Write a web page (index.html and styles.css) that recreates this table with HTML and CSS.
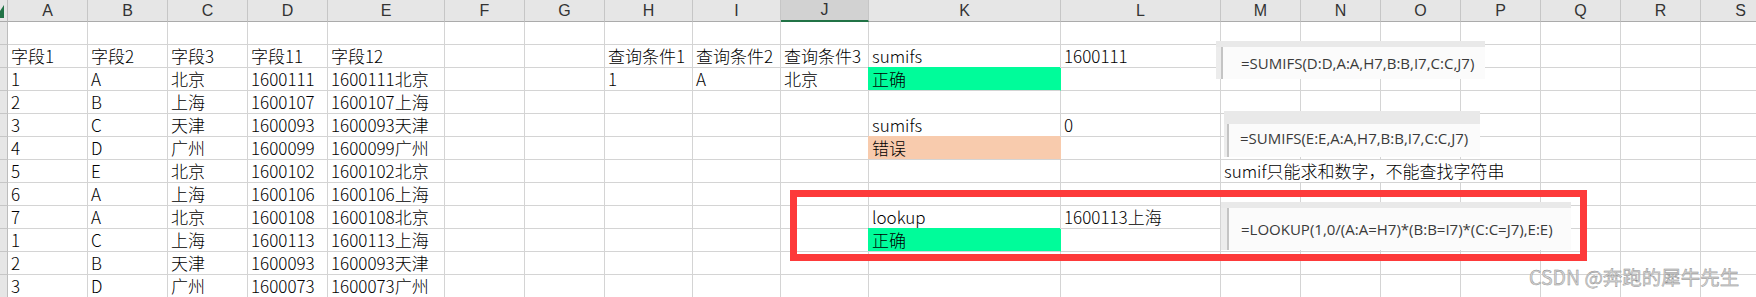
FILE: index.html
```html
<!DOCTYPE html>
<html lang="zh-CN">
<head>
<meta charset="utf-8">
<title>Sheet</title>
<link rel="stylesheet" href="styles.css">
</head>
<body>
<div class="page">
  <div class="sheet">
    <div class="corner"><svg width="7" height="21" viewBox="0 0 7 21"><polygon points="0,11 4,5 4,18 0,18" fill="#217346"/></svg></div>
    <div class="ch">A</div><div class="ch">B</div><div class="ch">C</div><div class="ch">D</div><div class="ch">E</div><div class="ch">F</div><div class="ch">G</div><div class="ch">H</div><div class="ch">I</div><div class="ch sel">J</div><div class="ch">K</div><div class="ch">L</div><div class="ch">M</div><div class="ch">N</div><div class="ch">O</div><div class="ch">P</div><div class="ch">Q</div><div class="ch">R</div><div class="ch">S</div>

    <div class="rh"></div><div class="c"></div><div class="c"></div><div class="c"></div><div class="c"></div><div class="c"></div><div class="c"></div><div class="c"></div><div class="c"></div><div class="c"></div><div class="c"></div><div class="c"></div><div class="c"></div><div class="c"></div><div class="c"></div><div class="c"></div><div class="c"></div><div class="c"></div><div class="c"></div><div class="c"></div>

    <div class="rh"></div><div class="c">字段1</div><div class="c">字段2</div><div class="c">字段3</div><div class="c">字段11</div><div class="c">字段12</div><div class="c"></div><div class="c"></div><div class="c">查询条件1</div><div class="c">查询条件2</div><div class="c">查询条件3</div><div class="c">sumifs</div><div class="c">1600111</div><div class="c"></div><div class="c"></div><div class="c"></div><div class="c"></div><div class="c"></div><div class="c"></div><div class="c"></div>

    <div class="rh"></div><div class="c">1</div><div class="c">A</div><div class="c">北京</div><div class="c">1600111</div><div class="c">1600111北京</div><div class="c"></div><div class="c"></div><div class="c">1</div><div class="c">A</div><div class="c">北京</div><div class="c ok">正确</div><div class="c"></div><div class="c"></div><div class="c"></div><div class="c"></div><div class="c"></div><div class="c"></div><div class="c"></div><div class="c"></div>

    <div class="rh"></div><div class="c">2</div><div class="c">B</div><div class="c">上海</div><div class="c">1600107</div><div class="c">1600107上海</div><div class="c"></div><div class="c"></div><div class="c"></div><div class="c"></div><div class="c"></div><div class="c"></div><div class="c"></div><div class="c"></div><div class="c"></div><div class="c"></div><div class="c"></div><div class="c"></div><div class="c"></div><div class="c"></div>

    <div class="rh"></div><div class="c">3</div><div class="c">C</div><div class="c">天津</div><div class="c">1600093</div><div class="c">1600093天津</div><div class="c"></div><div class="c"></div><div class="c"></div><div class="c"></div><div class="c"></div><div class="c">sumifs</div><div class="c">0</div><div class="c"></div><div class="c"></div><div class="c"></div><div class="c"></div><div class="c"></div><div class="c"></div><div class="c"></div>

    <div class="rh"></div><div class="c">4</div><div class="c">D</div><div class="c">广州</div><div class="c">1600099</div><div class="c">1600099广州</div><div class="c"></div><div class="c"></div><div class="c"></div><div class="c"></div><div class="c"></div><div class="c bad">错误</div><div class="c"></div><div class="c"></div><div class="c"></div><div class="c"></div><div class="c"></div><div class="c"></div><div class="c"></div><div class="c"></div>

    <div class="rh"></div><div class="c">5</div><div class="c">E</div><div class="c">北京</div><div class="c">1600102</div><div class="c">1600102北京</div><div class="c"></div><div class="c"></div><div class="c"></div><div class="c"></div><div class="c"></div><div class="c"></div><div class="c"></div><div class="c span4">sumif只能求和数字，不能查找字符串</div><div class="c"></div><div class="c"></div><div class="c"></div>

    <div class="rh"></div><div class="c">6</div><div class="c">A</div><div class="c">上海</div><div class="c">1600106</div><div class="c">1600106上海</div><div class="c"></div><div class="c"></div><div class="c"></div><div class="c"></div><div class="c"></div><div class="c"></div><div class="c"></div><div class="c"></div><div class="c"></div><div class="c"></div><div class="c"></div><div class="c"></div><div class="c"></div><div class="c"></div>

    <div class="rh"></div><div class="c">7</div><div class="c">A</div><div class="c">北京</div><div class="c">1600108</div><div class="c">1600108北京</div><div class="c"></div><div class="c"></div><div class="c"></div><div class="c"></div><div class="c"></div><div class="c">lookup</div><div class="c">1600113上海</div><div class="c"></div><div class="c"></div><div class="c"></div><div class="c"></div><div class="c"></div><div class="c"></div><div class="c"></div>

    <div class="rh"></div><div class="c">1</div><div class="c">C</div><div class="c">上海</div><div class="c">1600113</div><div class="c">1600113上海</div><div class="c"></div><div class="c"></div><div class="c"></div><div class="c"></div><div class="c"></div><div class="c ok">正确</div><div class="c"></div><div class="c"></div><div class="c"></div><div class="c"></div><div class="c"></div><div class="c"></div><div class="c"></div><div class="c"></div>

    <div class="rh"></div><div class="c">2</div><div class="c">B</div><div class="c">天津</div><div class="c">1600093</div><div class="c">1600093天津</div><div class="c"></div><div class="c"></div><div class="c"></div><div class="c"></div><div class="c"></div><div class="c"></div><div class="c"></div><div class="c"></div><div class="c"></div><div class="c"></div><div class="c"></div><div class="c"></div><div class="c"></div><div class="c"></div>

    <div class="rh"></div><div class="c">3</div><div class="c">D</div><div class="c">广州</div><div class="c">1600073</div><div class="c">1600073广州</div><div class="c"></div><div class="c"></div><div class="c"></div><div class="c"></div><div class="c"></div><div class="c"></div><div class="c"></div><div class="c"></div><div class="c"></div><div class="c"></div><div class="c"></div><div class="c"></div><div class="c"></div><div class="c"></div>
  </div>

  <div class="fbox f1">
    <div class="ftop"></div>
    <div class="fbody"><div class="fleft"></div><div class="ftext">=SUMIFS(D:D,A:A,H7,B:B,I7,C:C,J7)</div></div>
  </div>
  <div class="fbox f2">
    <div class="ftop"></div>
    <div class="fbody"><div class="fleft"></div><div class="ftext">=SUMIFS(E:E,A:A,H7,B:B,I7,C:C,J7)</div></div>
  </div>
  <div class="fbox f3">
    <div class="ftop"></div>
    <div class="fbody"><div class="fleft"></div><div class="ftext">=LOOKUP(1,0/(A:A=H7)*(B:B=I7)*(C:C=J7),E:E)</div></div>
  </div>

  <div class="redbox"></div>
  <div class="mark">CSDN @奔跑的犀牛先生</div>
</div>
</body>
</html>
```

FILE: styles.css
```css
html, body {
  margin: 0;
  padding: 0;
  background: #ffffff;
}
body {
  width: 1756px;
  height: 297px;
  overflow: hidden;
  font-family: "Noto Sans CJK SC", "Liberation Sans", sans-serif;
}
.page {
  position: relative;
  width: 1756px;
  height: 297px;
  overflow: hidden;
}
.sheet {
  display: grid;
  grid-template-columns: 8px 80px 80px 80px 80px 117px 80px 80px 88px 88px 88px 192px 160px 80px 80px 80px 80px 80px 80px 80px;
  grid-template-rows: 22px;
  grid-auto-rows: 23px;
  width: 1781px;
}
.corner {
  box-sizing: border-box;
  background: #e6e6e6;
  border-right: 1px solid #bdbdbd;
  border-bottom: 1px solid #ababab;
  overflow: hidden;
}
.corner svg { display: block; }
.ch {
  box-sizing: border-box;
  background: #e6e6e6;
  border-right: 1px solid #c6c6c6;
  border-bottom: 1px solid #ababab;
  color: #333333;
  font-family: "Liberation Sans", "Noto Sans CJK SC", sans-serif;
  font-size: 16px;
  line-height: 21px;
  text-align: center;
}
.ch.sel {
  background: #d2d2d2;
  border-bottom: 2px solid #217346;
  line-height: 20px;
}
.rh {
  box-sizing: border-box;
  background: #e6e6e6;
  border-right: 1px solid #bdbdbd;
  border-bottom: 1px solid #c6c6c6;
}
.c {
  box-sizing: border-box;
  border-right: 1px solid #d4d4d4;
  border-bottom: 1px solid #d4d4d4;
  padding-left: 3px;
  font-size: 17px;
  font-weight: 300;
  line-height: 22px;
  color: #000000;
  white-space: nowrap;
}
.span4 { grid-column: span 4; }
.ok {
  background: #00fc9a;
  border-right-color: #00fc9a;
  box-shadow: -1px -1px 0 0 #00fc9a;
}
.bad {
  background: #f8cbad;
  border-right-color: #f8cbad;
  box-shadow: -1px -1px 0 0 #f8cbad;
}

/* pasted formula-bar snippets */
.fbox {
  position: absolute;
  display: flex;
  flex-direction: column;
  background: #fbfbfb;
}
.ftop { background: #e9e9e9; }
.fbody { display: flex; flex: 1; }
.fleft {
  background: #ececec;
  border-right: 2px solid #c4c4c4;
}
.ftext {
  flex: 1;
  display: flex;
  align-items: center;
  font-family: "Open Sans", "Liberation Sans", sans-serif;
  font-size: 15px;
  color: #3a3a3a;
  white-space: nowrap;
}
.f1 { left: 1216px; top: 41px; width: 269px; height: 38px; }
.f1 .ftop { height: 6px; }
.f1 .fleft { width: 5px; }
.f1 .ftext { padding-left: 18px; }

.f2 { left: 1224px; top: 111px; width: 256px; height: 46px; }
.f2 .ftop { height: 13px; }
.f2 .fleft { width: 3px; }
.f2 .ftext { padding-left: 11px; padding-bottom: 6px; }

.f3 { left: 1221px; top: 202px; width: 350px; height: 48px; }
.f3 .ftop { height: 6px; }
.f3 .fleft { width: 6px; }
.f3 .ftext { padding-left: 12px; }

.redbox {
  position: absolute;
  left: 790px;
  top: 190px;
  width: 797px;
  height: 71px;
  box-sizing: border-box;
  border: 7px solid #fd3a3a;
}
.mark {
  position: absolute;
  left: 1529px;
  top: 264px;
  font-size: 19.5px;
  line-height: 26px;
  color: #d4d4d4;
  -webkit-text-stroke: 0.4px #8a8a8a;
  white-space: nowrap;
}
```
